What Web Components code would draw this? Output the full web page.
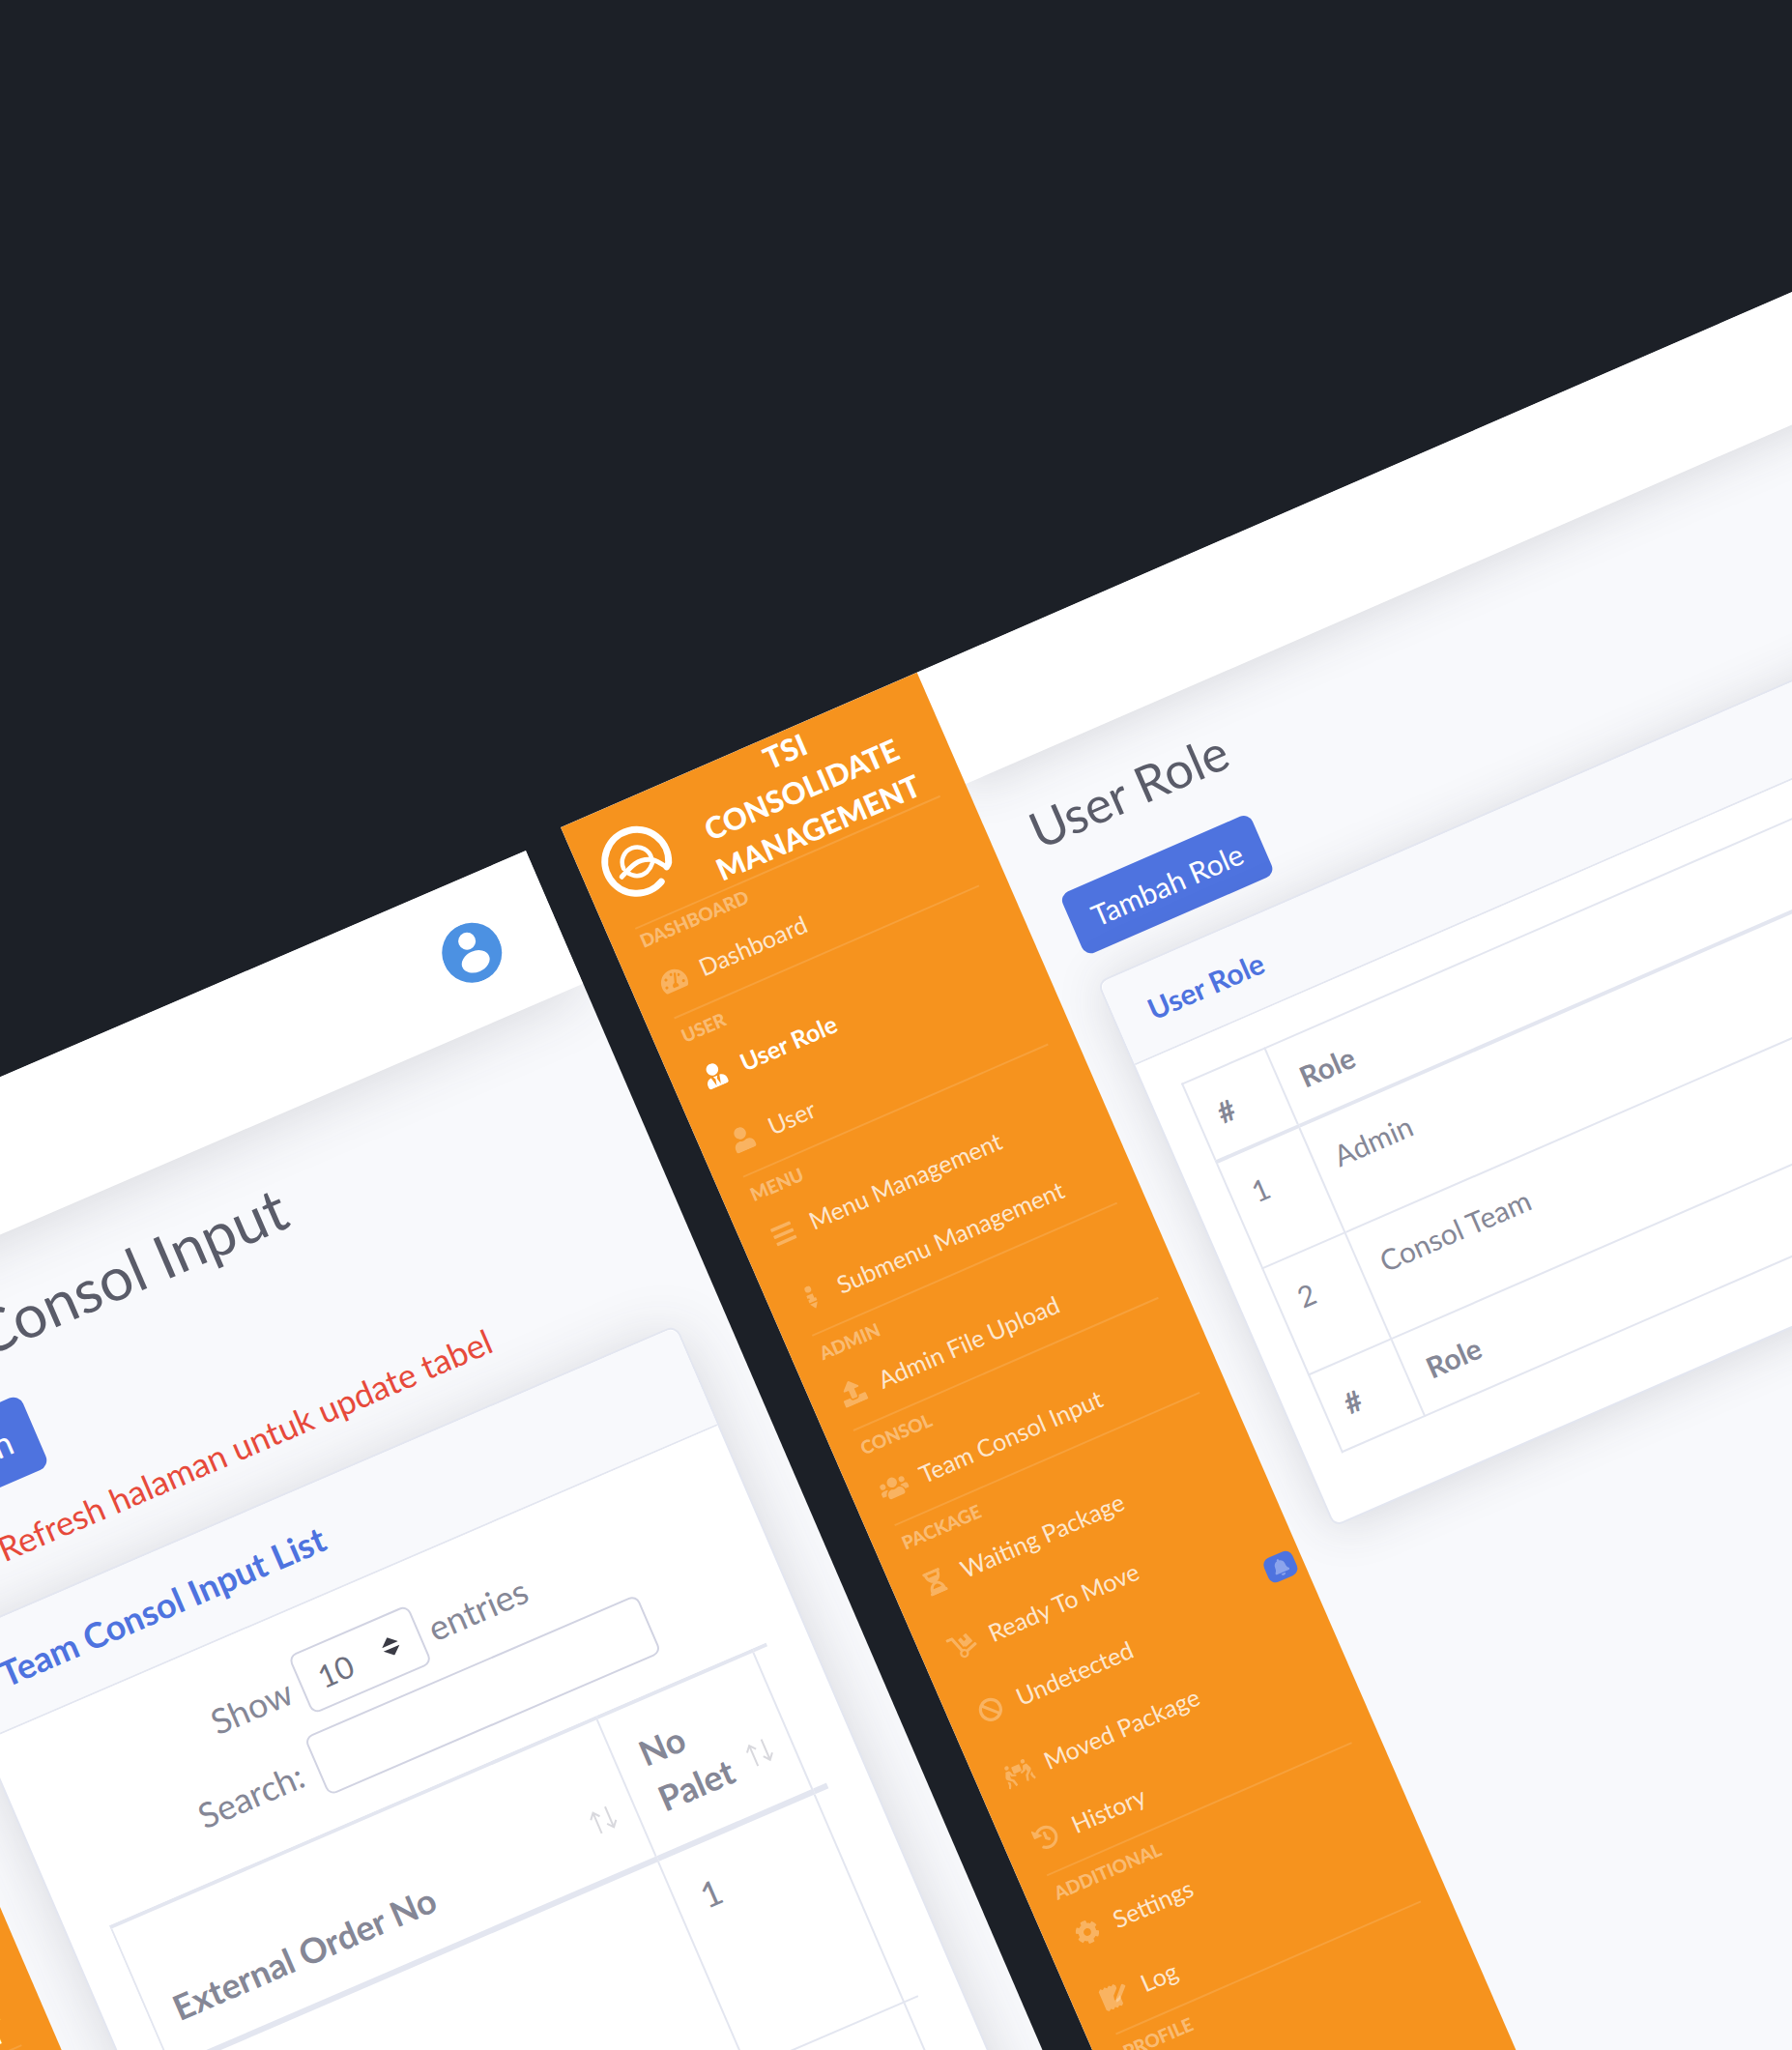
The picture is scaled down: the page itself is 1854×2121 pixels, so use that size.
<!DOCTYPE html>
<html lang="id">
<head>
<meta charset="utf-8">
<title>TSI Consolidate Management</title>
<style>
  html, body { margin: 0; height: 100%; }
  body { background: #1c2027; font-family: Lato, "Open Sans", sans-serif; color: #858796; overflow: hidden; }
  desk-canvas { height: 100%; }
  app-window.team { left: -868px; top: 880px; width: 1412px; height: 1500px; transform-origin: 100% 0; transform: rotate(-23.3deg);
    --side: 480px; --bar: 150px; --gutter: 51px; --shadow: 0 5px 60px rgba(58,59,69,.17); }
  app-window.role { left: 580px; top: 856px; width: 1900px; height: 1800px; transform-origin: 0 0; transform: rotate(-23.5deg);
    --side: 402px; --bar: 126px; --gutter: 43px; --shadow: 0 4px 50px rgba(58,59,69,.17); }
  .team { --text: 36px; --line: 51px; --title: 62px; --title-line: 72px; --title-gap: 36px; --gap: 34px; --pad: 43px; --cell: 26px;
    --head-line: 44px; --head-pad: 34px; --radius: 11px; --btn-y: 15px; --btn-x: 26px; --thick: 6px;
    --brand-text: 38px; --brand-line: 51px; --brand-height: 150px; --logo: 86px; --brand-pad: 28px; --brand-gap: 43px; --rule-x: 36px; }
  .role { --text: 30px; --line: 43px; --title: 52px; --title-line: 60px; --title-gap: 41px; --gap: 29px; --pad: 36px; --cell: 21px;
    --head-line: 36px; --head-pad: 29px; --radius: 10px; --btn-y: 13px; --btn-x: 23px; --thick: 4px;
    --brand-text: 31px; --brand-line: 43px; --brand-height: 126px; --logo: 72px; --brand-pad: 23px; --brand-gap: 36px; --rule-x: 29px; }
</style>
</head>
<body>
<desk-canvas>
  <app-window class="team">
    <side-bar slot="side" class="low">
      <side-brand></side-brand>
      <side-rule></side-rule>
    </side-bar>
    <user-avatar slot="bar"></user-avatar>
    <page-title>Team Consol Input</page-title>
    <action-button>Bagikan</action-button>
    <page-note>Note: Refresh halaman untuk update tabel</page-note>
    <panel-card>
      <span slot="title">Team Consol Input List</span>
      <table-tools></table-tools>
      <order-table></order-table>
    </panel-card>
  </app-window>

  <app-window class="role">
    <side-bar slot="side">
      <side-brand></side-brand>
      <side-rule></side-rule>
      <nav-heading tight>DASHBOARD</nav-heading>
      <nav-item icon="gauge">Dashboard</nav-item>
      <side-rule></side-rule>
      <nav-heading>USER</nav-heading>
      <nav-item icon="tie" active>User Role</nav-item>
      <nav-item icon="user">User</nav-item>
      <side-rule></side-rule>
      <nav-heading>MENU</nav-heading>
      <nav-item icon="bars">Menu Management</nav-item>
      <nav-item icon="dots">Submenu Management</nav-item>
      <side-rule></side-rule>
      <nav-heading>ADMIN</nav-heading>
      <nav-item icon="upload">Admin File Upload</nav-item>
      <side-rule></side-rule>
      <nav-heading>CONSOL</nav-heading>
      <nav-item icon="users">Team Consol Input</nav-item>
      <side-rule></side-rule>
      <nav-heading>PACKAGE</nav-heading>
      <nav-item icon="hourglass">Waiting Package</nav-item>
      <nav-item icon="dolly" badge>Ready To Move</nav-item>
      <nav-item icon="ban">Undetected</nav-item>
      <nav-item icon="carry">Moved Package</nav-item>
      <nav-item icon="history">History</nav-item>
      <side-rule></side-rule>
      <nav-heading>ADDITIONAL</nav-heading>
      <nav-item icon="cog">Settings</nav-item>
      <nav-item icon="log">Log</nav-item>
      <side-rule></side-rule>
      <nav-heading>PROFILE</nav-heading>
    </side-bar>
    <page-title>User Role</page-title>
    <action-button>Tambah Role</action-button>
    <panel-card>
      <span slot="title">User Role</span>
      <role-table></role-table>
    </panel-card>
  </app-window>
</desk-canvas>

<script>
  const define = (name, render) => customElements.define(name, class extends HTMLElement {
    constructor() {
      super();
      this.attachShadow({ mode: 'open' });
    }
    connectedCallback() {
      this.shadowRoot.innerHTML = '<style>*{box-sizing:border-box}</style>' + render(this);
    }
  });

  const ICONS = {
    gauge: ['0 0 576 512', '<path d="M288 32C128.94 32 0 160.94 0 320c0 52.8 14.25 102.26 39.06 144.8 5.61 9.62 16.3 15.2 27.44 15.2h443c11.14 0 21.83-5.58 27.44-15.2C561.75 422.26 576 372.8 576 320c0-159.06-128.94-288-288-288zm0 64c14.71 0 26.58 10.13 30.32 23.65-1.11 2.26-2.64 4.23-3.45 6.67l-9.22 27.67c-5.13 3.49-10.97 6.01-17.64 6.01-17.67 0-32-14.33-32-32S270.33 96 288 96zM96 384c-17.67 0-32-14.33-32-32s14.33-32 32-32 32 14.33 32 32-14.33 32-32 32zm48-160c-17.67 0-32-14.33-32-32s14.33-32 32-32 32 14.33 32 32-14.33 32-32 32zm246.77-72.41l-61.33 184C343.13 347.33 352 364.54 352 384c0 11.72-3.38 22.55-8.88 32H232.88c-5.5-9.45-8.88-20.28-8.88-32 0-33.94 26.5-61.43 59.9-63.59l61.34-184.01c4.17-12.56 17.73-19.45 30.36-15.17 12.57 4.19 19.35 17.79 15.17 30.36zm14.66 57.2l15.52-46.55c3.47-1.29 7.13-2.23 11.05-2.23 17.67 0 32 14.33 32 32s-14.33 32-32 32c-11.38-.01-20.89-6.28-26.57-15.22zM480 384c-17.67 0-32-14.33-32-32s14.33-32 32-32 32 14.33 32 32-14.33 32-32 32z"/>'],
    tie: ['0 0 448 512', '<path d="M224 256c70.7 0 128-57.3 128-128S294.7 0 224 0 96 57.3 96 128s57.3 128 128 128zm95.8 32.6L272 480l-32-136 32-56h-96l32 56-32 136-47.8-191.4C56.9 292 0 350.3 0 422.4V464c0 26.5 21.5 48 48 48h352c26.5 0 48-21.5 48-48v-41.6c0-72.1-56.9-130.4-128.2-133.8z"/>'],
    user: ['0 0 448 512', '<path d="M224 256c70.7 0 128-57.3 128-128S294.7 0 224 0 96 57.3 96 128s57.3 128 128 128zm89.6 32h-16.7c-22.2 10.2-46.9 16-72.9 16s-50.6-5.8-72.9-16h-16.7C60.2 288 0 348.2 0 422.4V464c0 26.5 21.5 48 48 48h352c26.5 0 48-21.5 48-48v-41.6c0-74.2-60.2-134.4-134.4-134.4z"/>'],
    bars: ['0 0 448 512', '<path d="M16 132h416c8.8 0 16-7.2 16-16V76c0-8.8-7.2-16-16-16H16C7.2 60 0 67.2 0 76v40c0 8.8 7.2 16 16 16zm0 160h416c8.8 0 16-7.2 16-16v-40c0-8.8-7.2-16-16-16H16c-8.8 0-16 7.2-16 16v40c0 8.8 7.2 16 16 16zm0 160h416c8.8 0 16-7.2 16-16v-40c0-8.8-7.2-16-16-16H16c-8.8 0-16 7.2-16 16v40c0 8.8 7.2 16 16 16z"/>'],
    dots: ['0 0 192 512', '<circle cx="96" cy="70" r="70"/><path d="M10 190h140v98h36v66H10v-66h36v-34H10z"/><path d="M10 384h172l-86 124z"/>'],
    upload: ['0 0 512 512', '<path d="M296 384h-80c-13.3 0-24-10.7-24-24V192h-87.7c-17.8 0-26.7-21.5-14.1-34.1L242.3 5.7c7.5-7.5 19.8-7.5 27.3 0l152.2 152.2c12.6 12.6 3.7 34.1-14.1 34.1H320v168c0 13.3-10.7 24-24 24zm216-8v112c0 13.3-10.7 24-24 24H24c-13.3 0-24-10.7-24-24V376c0-13.3 10.7-24 24-24h136v8c0 30.9 25.1 56 56 56h80c30.9 0 56-25.1 56-56v-8h136c13.3 0 24 10.7 24 24z"/>'],
    users: ['0 0 640 512', '<circle cx="96" cy="160" r="64"/><circle cx="544" cy="160" r="64"/><circle cx="320" cy="144" r="112"/><path d="M128 256H64c-35 0-64 29-64 64v32c0 18 14 32 32 32h66c6-45 34-84 74-110-11-11-27-18-44-18zM576 256h-64c-17 0-33 7-44 18 40 26 68 65 74 110h66c18 0 32-14 32-32v-32c0-35-29-64-64-64zM397 288h-8c-42 20-95 20-138 0h-8c-64 0-115 52-115 115v29c0 26 22 48 48 48h288c26 0 48-22 48-48v-29c0-63-51-115-115-115z"/>'],
    hourglass: ['0 0 384 512', '<path d="M360 0H24C10.745 0 0 10.745 0 24v16c0 13.255 10.745 24 24 24 0 90.965 51.016 167.734 120.842 192C75.016 280.266 24 357.035 24 448c-13.255 0-24 10.745-24 24v16c0 13.255 10.745 24 24 24h336c13.255 0 24-10.745 24-24v-16c0-13.255-10.745-24-24-24 0-90.965-51.016-167.734-120.842-192C308.984 231.734 360 154.965 360 64c13.255 0 24-10.745 24-24V24c0-13.255-10.745-24-24-24zm-75.078 384H99.08c17.059-46.797 52.096-80 92.92-80 40.821 0 75.862 33.196 92.922 80zm.019-256H99.078C91.988 108.548 88 86.748 88 64h208c0 22.805-3.987 44.587-11.059 64z"/>'],
    dolly: ['0 0 576 512', '<path d="M294.2 277.7c18 5 34.7 13.4 49.5 24.7l161.5-53.8c8.4-2.8 12.9-11.9 10.1-20.2L454.9 47.2c-2.8-8.4-11.9-12.9-20.2-10.1l-61.1 20.4 33.1 99.4L346 177l-33.1-99.4-61.6 20.5c-8.4 2.8-12.9 11.9-10.1 20.2l53 179.4zm281 48.7L565 296c-2.8-8.4-11.9-12.9-20.2-10.1l-213.5 71.2c-17.2-22-43.6-36.4-73.5-37L158.4 21.9C154 8.8 141.8 0 128 0H16C7.2 0 0 7.2 0 16v32c0 8.8 7.2 16 16 16h88.9l92.2 276.7c-26.1 20.4-41.7 53.6-36 90.5 6.1 39.4 37.9 72.3 77.3 79.2 60.2 10.7 112.3-34.8 113.4-92.6l213.3-71.2c8.3-2.8 12.9-11.8 10.1-20.2zM256 464c-26.5 0-48-21.5-48-48s21.5-48 48-48 48 21.5 48 48-21.5 48-48 48z"/>'],
    ban: ['0 0 512 512', '<circle cx="256" cy="256" r="215" fill="none" stroke="currentColor" stroke-width="66"/><path d="M126 126l260 260" stroke="currentColor" stroke-width="62"/>'],
    carry: ['0 0 640 512', '<circle cx="128" cy="48" r="48"/><circle cx="512" cy="48" r="48"/><rect x="224" y="70" width="192" height="160" rx="20"/><path d="M70 124h62c18 0 32 10 38 26l26 72 68 30v34h-34l-78-30-18-40-12 78 62 58 30 130-46 20-36-124-88-76c-20-18-26-36-22-64zM570 124h-62c-18 0-32 10-38 26l-26 72-68 30v34h34l78-30 18-40 12 78-62 58-30 130 46 20 36-124 88-76c20-18 26-36 22-64zM30 330l54 48-16 70-36 62-42-24 34-60zM610 330l-54 48 16 70 36 62 42-24-34-60z"/>'],
    history: ['0 0 512 512', '<path d="M504 255.531c.253 136.64-111.18 248.372-247.82 248.468-59.015.042-113.223-20.53-155.822-54.911-11.077-8.94-11.905-25.541-1.839-35.607l11.267-11.267c8.609-8.609 22.353-9.551 31.891-1.984C173.062 425.135 212.781 440 256 440c101.705 0 184-82.311 184-184 0-101.705-82.311-184-184-184-48.814 0-93.149 18.969-126.068 49.932l50.754 50.754c10.08 10.08 2.941 27.314-11.313 27.314H24c-8.837 0-16-7.163-16-16V38.627c0-14.254 17.234-21.393 27.314-11.314l49.372 49.372C129.209 34.136 189.552 8 256 8c136.81 0 247.747 110.78 248 247.531zm-180.912 78.784l9.823-12.63c8.138-10.463 6.253-25.542-4.21-33.679L288 256.349V152c0-13.255-10.745-24-24-24h-16c-13.255 0-24 10.745-24 24v135.651l65.409 50.874c10.463 8.137 25.541 6.253 33.679-4.21z"/>'],
    cog: ['0 0 512 512', '<path d="M487.4 315.7l-42.6-24.6c4.3-23.2 4.3-47 0-70.2l42.6-24.6c4.9-2.8 7.1-8.6 5.5-14-11.1-35.6-30-67.8-54.7-94.6-3.8-4.1-10-5.1-14.8-2.3L380.8 110c-17.9-15.4-38.5-27.3-60.8-35.1V25.8c0-5.6-3.9-10.5-9.4-11.7-36.7-8.2-74.3-7.8-109.2 0-5.5 1.2-9.4 6.1-9.4 11.7V75c-22.2 7.9-42.8 19.8-60.8 35.1L88.7 85.5c-4.9-2.8-11-1.9-14.8 2.3-24.7 26.7-43.6 58.9-54.7 94.6-1.7 5.4.6 11.2 5.5 14L67.3 221c-4.3 23.2-4.3 47 0 70.2l-42.6 24.6c-4.9 2.8-7.1 8.6-5.5 14 11.1 35.6 30 67.8 54.7 94.6 3.8 4.1 10 5.1 14.8 2.3l42.6-24.6c17.9 15.4 38.5 27.3 60.8 35.1v49.2c0 5.6 3.9 10.5 9.4 11.7 36.7 8.2 74.3 7.8 109.2 0 5.5-1.2 9.4-6.1 9.4-11.7v-49.2c22.2-7.9 42.8-19.8 60.8-35.1l42.6 24.6c4.9 2.8 11 1.9 14.8-2.3 24.7-26.7 43.6-58.9 54.7-94.6 1.5-5.5-.7-11.3-5.6-14.1zM256 336c-44.1 0-80-35.9-80-80s35.9-80 80-80 80 35.9 80 80-35.9 80-80 80z"/>'],
    log: ['0 0 576 512', '<path d="M0 48l50-44 48 36 50-40 48 40 50-36 50 36 44-30 44 42v64L262 238l-22 100 102-22 42-40v188l-44 44-50-36-44 40-50-40-50 40-48-40-50 36-48-44z"/><path d="M530 88l36 36c10 10 10 24 0 34L346 376l-80 18 18-80L502 88c8-8 20-8 28 0z"/>'],
    bell: ['0 0 448 512', '<path d="M224 512c35.32 0 63.97-28.65 63.97-64H160.03c0 35.35 28.65 64 63.97 64zm215.39-149.71c-19.32-20.76-55.47-51.99-55.47-154.29 0-77.7-54.48-139.9-127.94-155.16V32c0-17.67-14.32-32-31.98-32s-31.98 14.33-31.98 32v20.84C118.56 68.1 64.08 130.3 64.08 208c0 102.3-36.15 133.53-55.47 154.29-6 6.45-8.66 14.16-8.61 21.71.11 16.4 12.98 32 32.1 32h383.8c19.12 0 32-15.6 32.1-32 .05-7.55-2.61-15.27-8.61-21.71z"/>']
  };

  define('desk-canvas', () => `
    <style>:host{display:block;position:relative;overflow:hidden}</style><slot></slot>`);

  define('app-window', () => `
    <style>
      :host{display:flex;position:absolute;overflow:hidden;background:#f8f9fc;font-size:var(--text);line-height:var(--line)}
      aside{flex:none;width:var(--side);background:#f6931e;position:relative;z-index:1}
      section{flex:1;min-width:0;display:flex;flex-direction:column}
      header{height:var(--bar);flex:none;background:#fff;box-shadow:var(--shadow);display:flex;align-items:center;justify-content:flex-end;padding:0 62px}
      main{padding:var(--gutter);display:flex;flex-direction:column;align-items:stretch}
    </style>
    <aside><slot name="side"></slot></aside>
    <section><header><slot name="bar"></slot></header><main><slot></slot></main></section>`);

  define('side-bar', () => `
    <style>:host{display:flex;flex-direction:column}:host(.low){padding-top:778px}</style><slot></slot>`);

  define('side-brand', () => `
    <style>
      :host{display:block}
      a{display:flex;align-items:center;gap:var(--brand-gap);height:var(--brand-height);padding-left:var(--brand-pad);color:#fff;text-decoration:none;font-weight:900;font-size:var(--brand-text);line-height:var(--brand-line);text-align:center}
      svg{flex:none;width:var(--logo);height:var(--logo);overflow:visible}
      span{display:block}
    </style>
    <a href="#">
      <svg viewBox="0 0 72 72" fill="none" stroke="#fff" stroke-linecap="round" stroke-linejoin="round" aria-hidden="true">
        <g transform="rotate(23.5 36 36)">
          <path stroke-width="7" d="M61 58A33 33 0 1 1 68.500 38Q68 41 66.500 42.500"/>
          <path stroke-width="4.500" d="M51 34A15.500 15.500 0 1 0 22 44.500"/>
          <path stroke-width="4.500" d="M25 48Q36 56 46 48Q50 44 52 38"/>
          <path stroke-width="5" d="M66 42C60 40 57 35 48 35C36 35 30 42 20 53"/>
        </g>
      </svg>
      <span>TSI<br>CONSOLIDATE<br>MANAGEMENT</span>
    </a>`);

  define('side-rule', () => `
    <style>:host{display:block}hr{margin:0 var(--rule-x);border:0;height:2px;background:rgba(255,255,255,.13)}</style><hr>`);

  define('nav-heading', () => `
    <style>:host{display:block;padding:9px 29px 2px;font-size:19px;line-height:22px;font-weight:900;color:rgba(255,255,255,.4)}
    :host([tight]){padding-top:3px}</style><slot></slot>`);

  define('nav-item', el => {
    const [box, art] = ICONS[el.getAttribute('icon')];
    return `
    <style>
      :host{display:block;position:relative}
      a{display:flex;align-items:center;gap:15px;height:72px;padding:0 29px;font-size:25px;line-height:37px;color:rgba(255,255,255,.8);text-decoration:none;white-space:nowrap}
      .i{flex:none;width:30px;height:25px;color:rgba(255,255,255,.3);fill:currentColor}
      :host([active]) a{color:#fff;font-weight:700}
      :host([active]) .i{color:#fff}
      b{position:absolute;right:8px;top:79px;width:32px;height:27px;border-radius:8px;background:#4e73df;display:grid;place-items:center}
      b svg{width:16px;height:18px;fill:#8ba4ec}
    </style>
    <a href="#"><svg class="i" viewBox="${box}" aria-hidden="true">${art}</svg><span><slot></slot></span></a>
    ${el.hasAttribute('badge') ? `<b><svg viewBox="${ICONS.bell[0]}" aria-hidden="true">${ICONS.bell[1]}</svg></b>` : ''}`;
  });

  define('user-avatar', () => `
    <style>:host{display:block}button{display:block;border:0;padding:0;background:none}svg{display:block;width:62px;height:62px}</style>
    <button type="button" aria-label="Profile"><svg viewBox="0 0 62 62"><circle cx="31" cy="31" r="31" fill="#4c91e2"/><circle cx="31" cy="18" r="9" fill="#fff"/><ellipse cx="31" cy="41" rx="15" ry="11" fill="#fff"/></svg></button>`);

  define('page-title', () => `
    <style>:host{display:block}h1{margin:0 0 var(--title-gap);font-weight:400;font-size:var(--title);line-height:var(--title-line);color:#5a5c69}</style>
    <h1><slot></slot></h1>`);

  define('action-button', () => `
    <style>:host{display:flex;margin-bottom:var(--gap)}
    button{font:inherit;color:#fff;background:#4e73df;border:0;border-radius:var(--radius);padding:var(--btn-y) var(--btn-x)}</style>
    <button type="button"><slot></slot></button>`);

  define('page-note', () => `
    <style>:host{display:block}p{margin:0 0 37px;font-size:35px;color:#e74a3b;white-space:nowrap}</style><p><slot></slot></p>`);

  define('panel-card', () => `
    <style>
      :host{display:block;background:#fff;border:2px solid #e3e6f0;border-radius:var(--radius);box-shadow:var(--shadow)}
      h2{margin:0;padding:0 var(--pad);background:#f8f9fc;border-bottom:2px solid #e3e6f0;border-radius:var(--radius) var(--radius) 0 0;font-size:inherit;font-weight:700;line-height:var(--head-line);height:calc(var(--head-line) + var(--head-pad) + var(--head-pad) - 1px);color:#4e73df;display:flex;align-items:center}
      div{padding:var(--pad)}
    </style>
    <h2><slot name="title"></slot></h2><div><slot></slot></div>`);

  define('table-tools', () => `
    <style>
      :host{display:flex;flex-direction:column;align-items:center;gap:18px;padding-bottom:33px}
      label{display:flex;align-items:center}
      .show{gap:11px;margin-right:25px}
      .find{gap:17px;margin-left:28px}
      .pick{position:relative;display:block}
      select,input{display:block;font:inherit;font-size:32px;color:#6e707e;height:66px;background:#fff;border:2px solid #d1d3e2;border-radius:9px;margin:0}
      select{appearance:none;width:135px;padding:0 19px}
      input{width:375px;padding:0 17px}
      svg{position:absolute;right:24px;top:23px;width:18px;height:20px;pointer-events:none}
    </style>
    <label class="show">Show <span class="pick"><select><option>10</option></select>
      <svg viewBox="0 0 18 20" fill="#3a3b45"><path d="M0 8L9 0l9 8zM0 12h18l-9 8z"/></svg></span> entries</label>
    <label class="find">Search: <input type="search"></label>`);

  const TABLE = `
    table{border-collapse:collapse;width:100%}
    th,td{border:2px solid #e3e6f0;padding:var(--cell);text-align:left;vertical-align:top}
    th{font-weight:700}`;

  define('order-table', () => {
    const sort = '<svg viewBox="0 0 28 26" fill="none" stroke="#858796" stroke-opacity=".32" stroke-width="2" aria-hidden="true"><path d="M7 25V2M2 8l5-6 5 6M21 1v23M16 18l5 6 5-6"/></svg>';
    return `
    <style>
      :host{display:block;overflow:hidden}${TABLE}
      table{table-layout:fixed;width:900px}
      thead th{border-top:4px solid #e3e6f0;border-bottom:var(--thick) solid #e3e6f0;vertical-align:bottom;padding-right:20px}
      .h{display:flex;justify-content:space-between;align-items:flex-end}
      svg{flex:none;width:28px;height:26px;margin-bottom:17px}
      tbody td{height:237px}
    </style>
    <table>
      <colgroup><col style="width:547px"><col style="width:176px"><col></colgroup>
      <thead><tr><th><div class="h"><span>External Order No</span>${sort}</div></th><th><div class="h"><span>No<br>Palet</span>${sort}</div></th><th></th></tr></thead>
      <tbody><tr><td></td><td>1</td><td></td></tr><tr><td></td><td></td><td></td></tr></tbody>
    </table>`;
  });

  define('role-table', () => `
    <style>
      :host{display:block;margin-bottom:29px}${TABLE}
      thead th{border-bottom-width:var(--thick)}
      tbody td{height:120px}
      .n{width:93px}
    </style>
    <table>
      <thead><tr><th class="n">#</th><th>Role</th></tr></thead>
      <tbody><tr><td>1</td><td>Admin</td></tr><tr><td>2</td><td>Consol Team</td></tr></tbody>
      <tfoot><tr><th>#</th><th>Role</th></tr></tfoot>
    </table>`);
</script>
</body>
</html>
